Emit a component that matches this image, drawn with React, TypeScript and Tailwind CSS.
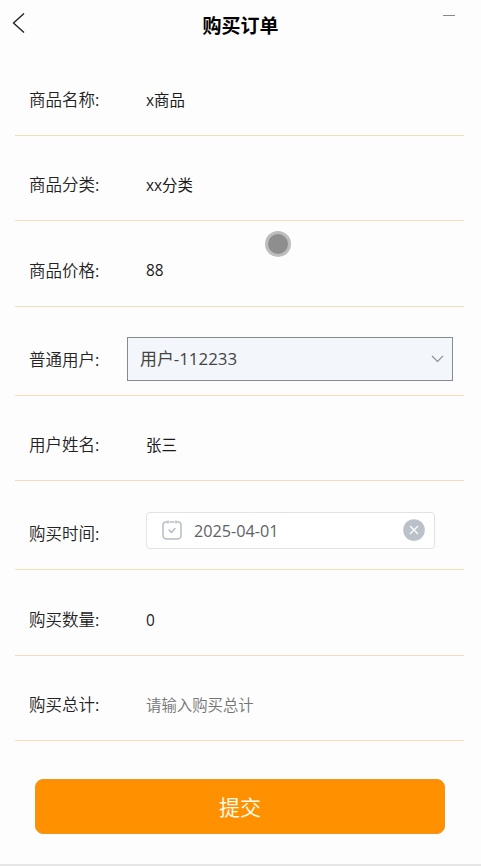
import React, { useState } from 'react';

interface RowProps {
  label: string;
  className: string;
  labelClassName?: string;
  children: React.ReactNode;
}

function FormRow({ label, className, labelClassName = '', children }: RowProps) {
  return (
    <div className={`flex items-center border-b border-[#f9dcb8] pl-[14px] ${className}`}>
      <div className={`w-[98px] shrink-0 whitespace-nowrap text-[16.5px] font-[350] text-[#222] ${labelClassName}`}>
        {label}<span className="font-normal">:</span>
      </div>
      {children}
    </div>
  );
}

const inputClass =
  'ml-[19px] w-[289px] bg-transparent p-0 pt-px text-[15.4px] text-[#1a1a1a] outline-none placeholder:font-[350] placeholder:text-[#757575] placeholder:opacity-100';

export default function App() {
  const [date, setDate] = useState('2025-04-01');

  return (
    <div className="relative flex h-[866px] w-[481px] flex-col overflow-hidden border-b-2 border-[#e6e6e6] bg-[#fdfdfd] font-['Open_Sans','Noto_Sans_CJK_SC',sans-serif]">
      <header className="grid h-[50px] shrink-0 grid-cols-3 items-center">
        <button className="ml-[12px] mt-[-4px] h-[22px] w-[14px]" aria-label="返回">
          <svg width="14" height="22" viewBox="0 0 14 22" fill="none" stroke="#222" strokeWidth="1.4">
            <path d="M12 1.5L1.5 11L12 20.5" />
          </svg>
        </button>
        <h1 className="pt-0.5 text-center text-[19px] font-bold text-black">购买订单</h1>
        <div className="mr-[26px] mt-[-19px] h-px w-3 justify-self-end bg-[#888]" />
      </header>

      <form className="flex flex-col pl-[15px] pr-[17px]" onSubmit={(e) => e.preventDefault()}>
        <FormRow label="商品名称" className="mt-[15px] h-[71px]">
          <input className={inputClass} defaultValue="x商品" />
        </FormRow>
        <FormRow label="商品分类" className="mt-[14px] h-[71px]">
          <input className={inputClass} defaultValue="xx分类" />
        </FormRow>
        <FormRow label="商品价格" className="mt-[14px] h-[72px]" labelClassName="pt-px">
          <input className={inputClass} defaultValue="88" />
        </FormRow>

        <FormRow label="普通用户" className="mt-[16px] h-[73px]" labelClassName="pt-0.5">
          <div className="flex h-[44px] w-[326px] shrink-0 items-center justify-between border border-[#888b8e] bg-[#f3f6fa] pl-3 pr-2">
            <span className="text-[16.9px] text-[#444]">用户-112233</span>
            <svg width="13" height="8" viewBox="0 0 13 8" fill="none" stroke="#8b9298" strokeWidth="1.2">
              <path d="M1 1L6.5 6.5L12 1" />
            </svg>
          </div>
        </FormRow>

        <FormRow label="用户姓名" className="mt-[14px] h-[71px]">
          <input className={inputClass} defaultValue="张三" />
        </FormRow>

        <FormRow label="购买时间" className="mt-[10px] h-[79px]" labelClassName="pt-2">
          <div className="ml-[19px] flex h-[37px] w-[289px] items-center rounded-[4px] border border-[#e0e3e8] bg-white pl-[15px] pr-[9px]">
            <svg width="20" height="20" viewBox="0 0 20 20" fill="none" stroke="#b5bdc7" strokeWidth="1.5" strokeLinecap="round" strokeLinejoin="round">
              <path d="M4.500 2H4a3 3 0 0 0-3 3v10.500a3.500 3.500 0 0 0 3.500 3.500h11a3.500 3.500 0 0 0 3.500-3.500V5a3 3 0 0 0-3-3h-.5M8 2h4M6 1v2M14 1v2M7 10l2.500 2.500L13 8.500" />
            </svg>
            <span className="ml-3 flex-1 pt-0.5 text-[16.2px] text-[#606266]">{date}</span>
            {date && (
              <button type="button" aria-label="清除" onClick={() => setDate('')}>
                <svg width="22" height="22" viewBox="0 0 22 22">
                  <circle cx="11" cy="11" r="10.800" fill="#bac1c9" />
                  <path d="M7 7l8 8M15 7l-8 8" stroke="#fff" strokeWidth="1.3" />
                </svg>
              </button>
            )}
          </div>
        </FormRow>

        <FormRow label="购买数量" className="mt-[15px] h-[71px]">
          <input className={inputClass} defaultValue="0" />
        </FormRow>
        <FormRow label="购买总计" className="mt-[14px] h-[71px]">
          <input className={inputClass} placeholder="请输入购买总计" />
        </FormRow>

        <button className="ml-[20px] mr-[19px] mt-[38px] h-[55px] rounded-[8px] border border-[#ee9420] bg-[#ff9000] pt-0.5 text-[21px] text-[#fffbea]">
          提交
        </button>
      </form>

      {/* touch pointer */}
      <div className="pointer-events-none absolute left-[265px] top-[231px] size-[26px] rounded-full border-[3px] border-[#bdbdbd] bg-[#8e8e8e]" />
    </div>
  );
}
